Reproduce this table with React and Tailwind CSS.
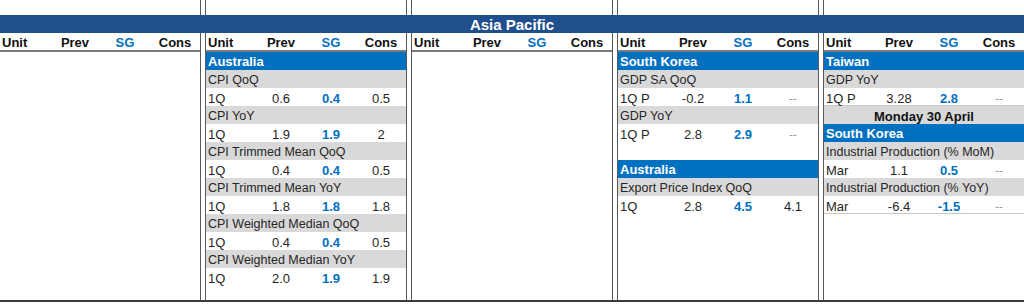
import React from "react";

const font = { fontFamily: '"Liberation Sans", Arial, sans-serif' };

const columns = [
  [],
  [
    { t: "country", v: "Australia" },
    { t: "label", v: "CPI QoQ" },
    { t: "data", v: ["1Q", "0.6", "0.4", "0.5"] },
    { t: "label", v: "CPI YoY" },
    { t: "data", v: ["1Q", "1.9", "1.9", "2"] },
    { t: "label", v: "CPI Trimmed Mean QoQ" },
    { t: "data", v: ["1Q", "0.4", "0.4", "0.5"] },
    { t: "label", v: "CPI Trimmed Mean YoY" },
    { t: "data", v: ["1Q", "1.8", "1.8", "1.8"] },
    { t: "label", v: "CPI Weighted Median QoQ" },
    { t: "data", v: ["1Q", "0.4", "0.4", "0.5"] },
    { t: "label", v: "CPI Weighted Median YoY" },
    { t: "data", v: ["1Q", "2.0", "1.9", "1.9"] },
  ],
  [],
  [
    { t: "country", v: "South Korea" },
    { t: "label", v: "GDP SA QoQ" },
    { t: "data", v: ["1Q P", "-0.2", "1.1", "--"] },
    { t: "label", v: "GDP YoY" },
    { t: "data", v: ["1Q P", "2.8", "2.9", "--"] },
    { t: "blank" },
    { t: "country", v: "Australia" },
    { t: "label", v: "Export Price Index QoQ" },
    { t: "data", v: ["1Q", "2.8", "4.5", "4.1"] },
  ],
  [
    { t: "country", v: "Taiwan" },
    { t: "label", v: "GDP YoY" },
    { t: "data", v: ["1Q P", "3.28", "2.8", "--"], line: true },
    { t: "day", v: "Monday 30 April" },
    { t: "country", v: "South Korea" },
    { t: "label", v: "Industrial Production (% MoM)" },
    { t: "data", v: ["Mar", "1.1", "0.5", "--"] },
    { t: "label", v: "Industrial Production (% YoY)" },
    { t: "data", v: ["Mar", "-6.4", "-1.5", "--"], line: true },
  ],
];

function Row({ row }) {
  if (row.t === "country")
    return (
      <div className="h-[18px] bg-[#0070c0] px-[2px] pt-[2px] text-[13px] font-bold leading-[16px] text-white">
        {row.v}
      </div>
    );
  if (row.t === "label")
    return (
      <div className="h-[18px] whitespace-nowrap bg-[#d9d9d9] px-[2px] pt-[3px] text-[12.5px] leading-[15px] text-[#262626]">
        {row.v}
      </div>
    );
  if (row.t === "day")
    return (
      <div className="h-[18px] bg-[#d9d9d9] pt-[3px] text-center text-[13px] font-bold leading-[15px] text-[#111]">
        {row.v}
      </div>
    );
  if (row.t === "blank") return <div className="h-[18px]" />;
  const [unit, prev, sg, cons] = row.v;
  return (
    <div
      className={`grid h-[18px] grid-cols-4 pt-[3px] text-[13px] leading-[15px] text-[#262626] ${
        row.line ? "border-b border-[#c8c8c8]" : ""
      }`}
    >
      <div className="px-[2px]">{unit}</div>
      <div className="text-center">{prev}</div>
      <div className="text-center font-bold text-[#0070c0]">{sg}</div>
      <div className={cons === "--" ? "text-center text-[11px] text-[#8a8a8a]" : "text-center"}>
        {cons}
      </div>
    </div>
  );
}

function Frame({ i, children, className = "" }) {
  const edge = i === 0 ? "w-[201px] border-r" : "w-[202px] border-x";
  return <div className={`${edge} shrink-0 border-[#5a5a5a] ${className}`}>{children}</div>;
}

export default function App() {
  return (
    <div className="h-[305px] w-[1024px] overflow-hidden bg-white" style={font}>
      <div className="flex h-[15px] gap-[4px]">
        {columns.map((_, i) => (
          <Frame key={i} i={i} />
        ))}
      </div>
      <div className="h-[18px] bg-[#1f4f8c] pt-[1px] text-center text-[15px] font-bold leading-[17px] text-white">
        Asia Pacific
      </div>
      <div className="flex h-[269px] gap-[4px] border-b-2 border-[#3a3a3a]">
        {columns.map((rows, i) => (
          <Frame key={i} i={i}>
            <div className="grid h-[19px] grid-cols-4 border-b-2 border-[#7a7a7a] pt-[2px] text-[13px] font-bold leading-[15px] text-[#111]">
              <div className="px-[2px]">Unit</div>
              <div className="text-center">Prev</div>
              <div className="text-center text-[#0070c0]">SG</div>
              <div className="text-center">Cons</div>
            </div>
            {rows.map((r, j) => (
              <Row key={j} row={r} />
            ))}
          </Frame>
        ))}
      </div>
    </div>
  );
}
